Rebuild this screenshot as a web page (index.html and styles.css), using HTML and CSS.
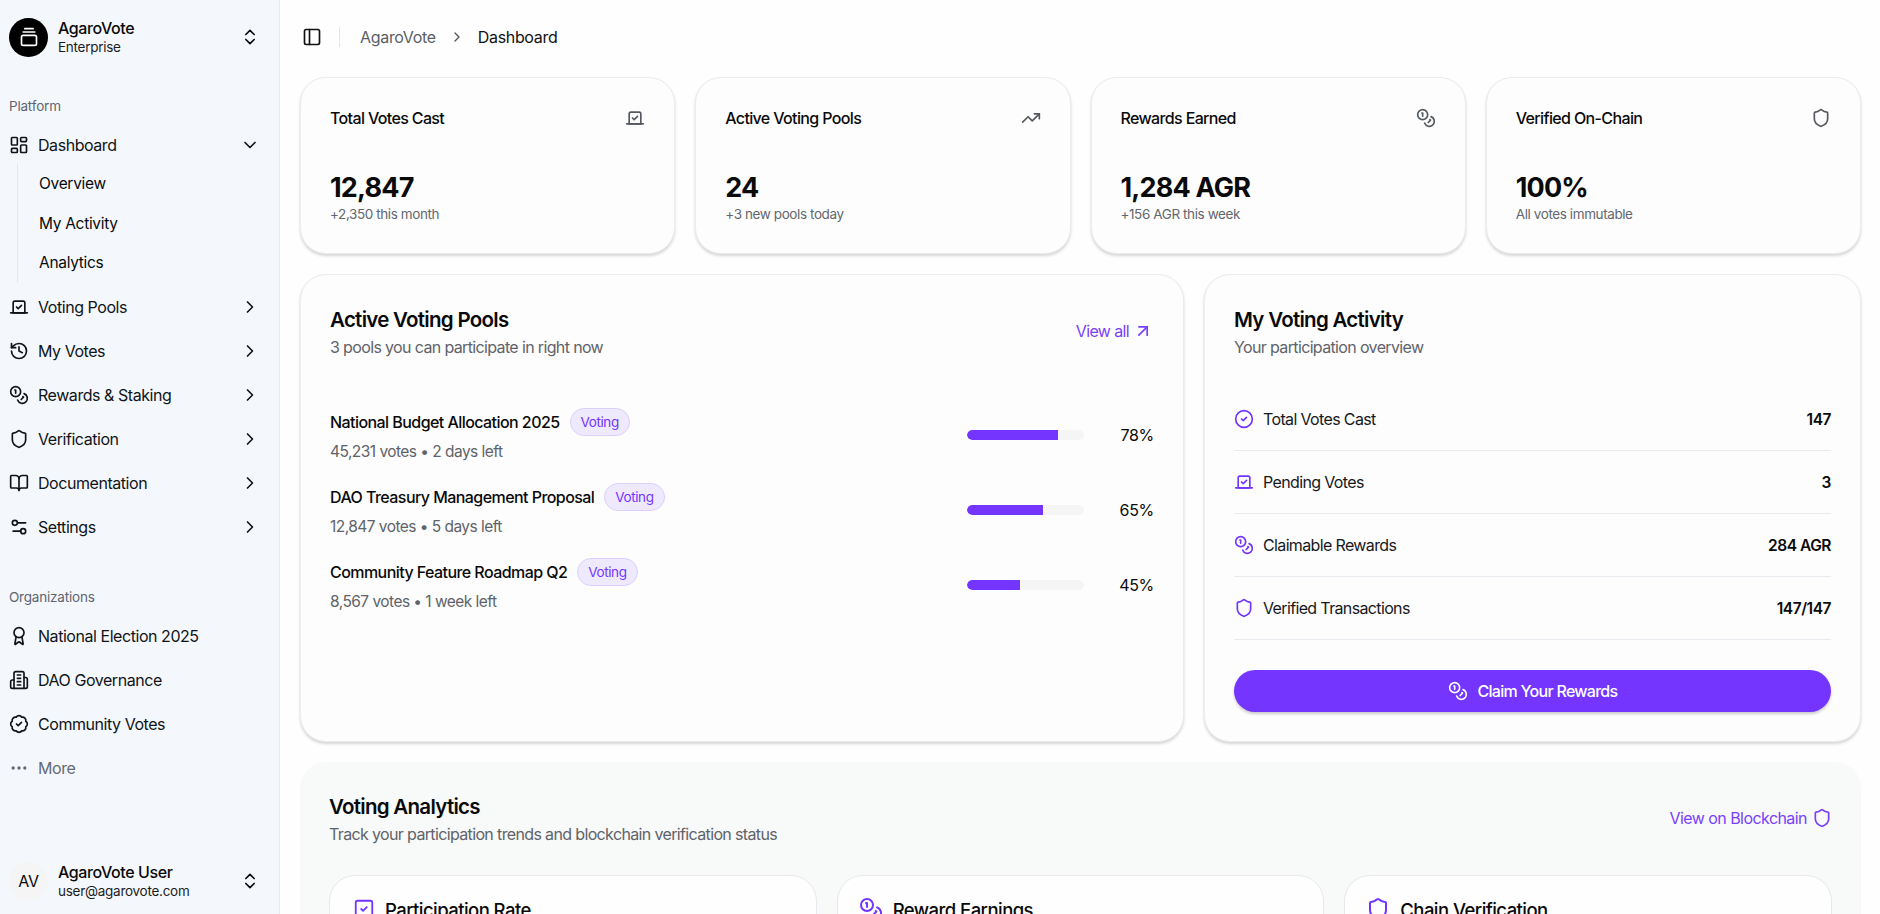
FILE: index.html
```html
<!DOCTYPE html>
<html lang="en">
<head>
<meta charset="utf-8">
<title>AgaroVote Dashboard</title>
<link rel="stylesheet" href="styles.css">
</head>
<body>
<svg class="sprite" xmlns="http://www.w3.org/2000/svg">
  <symbol id="i-logo" viewBox="0 0 24 24"><path d="M7 2h10"/><path d="M5 6h14"/><rect x="3" y="10" width="18" height="12" rx="2"/></symbol>
  <symbol id="i-updown" viewBox="0 0 24 24"><path d="m7 15 5 5 5-5"/><path d="m7 9 5-5 5 5"/></symbol>
  <symbol id="i-dash" viewBox="0 0 24 24"><rect x="3" y="3" width="7" height="9" rx="1"/><rect x="14" y="3" width="7" height="5" rx="1"/><rect x="14" y="12" width="7" height="9" rx="1"/><rect x="3" y="16" width="7" height="5" rx="1"/></symbol>
  <symbol id="i-down" viewBox="0 0 24 24"><path d="m6 9 6 6 6-6"/></symbol>
  <symbol id="i-right" viewBox="0 0 24 24"><path d="m9 18 6-6-6-6"/></symbol>
  <symbol id="i-vote" viewBox="0 0 24 24"><path d="m9 12 2 2 4-4"/><path d="M5 7c0-1.1.9-2 2-2h10a2 2 0 0 1 2 2v12H5V7Z"/><path d="M22 19H2"/></symbol>
  <symbol id="i-history" viewBox="0 0 24 24"><path d="M3 12a9 9 0 1 0 9-9 9.75 9.75 0 0 0-6.74 2.74L3 8"/><path d="M3 3v5h5"/><path d="M12 7v5l4 2"/></symbol>
  <symbol id="i-coins" viewBox="0 0 24 24"><circle cx="8" cy="8" r="6"/><path d="M18.09 10.37A6 6 0 1 1 10.34 18"/><path d="M7 6h1v4"/><path d="m16.71 13.88.7.71-2.82 2.82"/></symbol>
  <symbol id="i-shield" viewBox="0 0 24 24"><path d="M20 13c0 5-3.5 7.5-7.66 8.95a1 1 0 0 1-.67-.01C7.5 20.5 4 18 4 13V6a1 1 0 0 1 1-1c2 0 4.5-1.2 6.24-2.72a1.17 1.17 0 0 1 1.52 0C14.51 3.81 17 5 19 5a1 1 0 0 1 1 1z"/></symbol>
  <symbol id="i-book" viewBox="0 0 24 24"><path d="M12 7v14"/><path d="M3 18a1 1 0 0 1-1-1V4a1 1 0 0 1 1-1h5a4 4 0 0 1 4 4 4 4 0 0 1 4-4h5a1 1 0 0 1 1 1v13a1 1 0 0 1-1 1h-6a3 3 0 0 0-3 3 3 3 0 0 0-3-3z"/></symbol>
  <symbol id="i-settings" viewBox="0 0 24 24"><path d="M20 7h-9"/><path d="M14 17H5"/><circle cx="17" cy="17" r="3"/><circle cx="7" cy="7" r="3"/></symbol>
  <symbol id="i-award" viewBox="0 0 24 24"><path d="m15.477 12.89 1.515 8.526a.5.5 0 0 1-.81.47l-3.58-2.687a1 1 0 0 0-1.197 0l-3.586 2.686a.5.5 0 0 1-.81-.469l1.514-8.526"/><circle cx="12" cy="8" r="6"/></symbol>
  <symbol id="i-building" viewBox="0 0 24 24"><path d="M6 22V4a2 2 0 0 1 2-2h8a2 2 0 0 1 2 2v18Z"/><path d="M6 12H4a2 2 0 0 0-2 2v6a2 2 0 0 0 2 2h2"/><path d="M18 9h2a2 2 0 0 1 2 2v9a2 2 0 0 1-2 2h-2"/><path d="M10 6h4"/><path d="M10 10h4"/><path d="M10 14h4"/><path d="M10 18h4"/></symbol>
  <symbol id="i-badge" viewBox="0 0 24 24"><path d="M3.85 8.62a4 4 0 0 1 4.78-4.77 4 4 0 0 1 6.74 0 4 4 0 0 1 4.78 4.78 4 4 0 0 1 0 6.74 4 4 0 0 1-4.77 4.78 4 4 0 0 1-6.75 0 4 4 0 0 1-4.78-4.77 4 4 0 0 1 0-6.76Z"/><path d="m9 12 2 2 4-4"/></symbol>
  <symbol id="i-more" viewBox="0 0 24 24"><circle cx="12" cy="12" r="1"/><circle cx="19" cy="12" r="1"/><circle cx="5" cy="12" r="1"/></symbol>
  <symbol id="i-panel" viewBox="0 0 24 24"><rect x="3" y="3" width="18" height="18" rx="2"/><path d="M9 3v18"/></symbol>
  <symbol id="i-trend" viewBox="0 0 24 24"><path d="M22 7 13.5 15.5 8.5 10.5 2 17"/><path d="M16 7h6v6"/></symbol>
  <symbol id="i-arrow" viewBox="0 0 24 24"><path d="M7 7h10v10"/><path d="M7 17 17 7"/></symbol>
  <symbol id="i-check" viewBox="0 0 24 24"><circle cx="12" cy="12" r="10"/><path d="m9 12 2 2 4-4"/></symbol>
  <symbol id="i-square" viewBox="0 0 24 24"><rect x="3" y="3" width="18" height="18" rx="2"/><path d="m9 12 2 2 4-4"/></symbol>
</svg>

<div class="app">
  <aside class="sidebar">
    <div class="account">
      <span class="logo"><svg class="icon icon-20"><use href="#i-logo"/></svg></span>
      <div class="account-text"><div class="account-name">AgaroVote</div><div class="account-sub">Enterprise</div></div>
      <svg class="icon icon-20 nav-end"><use href="#i-updown"/></svg>
    </div>

    <div class="group-label">Platform</div>
    <nav class="nav">
      <a class="nav-item"><svg class="icon icon-20"><use href="#i-dash"/></svg><span>Dashboard</span><svg class="icon icon-20 nav-end"><use href="#i-down"/></svg></a>
      <div class="subnav">
        <a class="sub-item">Overview</a>
        <a class="sub-item">My Activity</a>
        <a class="sub-item">Analytics</a>
      </div>
      <a class="nav-item"><svg class="icon icon-20"><use href="#i-vote"/></svg><span>Voting Pools</span><svg class="icon icon-20 nav-end"><use href="#i-right"/></svg></a>
      <a class="nav-item"><svg class="icon icon-20"><use href="#i-history"/></svg><span>My Votes</span><svg class="icon icon-20 nav-end"><use href="#i-right"/></svg></a>
      <a class="nav-item"><svg class="icon icon-20"><use href="#i-coins"/></svg><span>Rewards &amp; Staking</span><svg class="icon icon-20 nav-end"><use href="#i-right"/></svg></a>
      <a class="nav-item"><svg class="icon icon-20"><use href="#i-shield"/></svg><span>Verification</span><svg class="icon icon-20 nav-end"><use href="#i-right"/></svg></a>
      <a class="nav-item"><svg class="icon icon-20"><use href="#i-book"/></svg><span>Documentation</span><svg class="icon icon-20 nav-end"><use href="#i-right"/></svg></a>
      <a class="nav-item"><svg class="icon icon-20"><use href="#i-settings"/></svg><span>Settings</span><svg class="icon icon-20 nav-end"><use href="#i-right"/></svg></a>
    </nav>

    <div class="group-label group-org">Organizations</div>
    <nav class="nav">
      <a class="nav-item"><svg class="icon icon-20"><use href="#i-award"/></svg><span>National Election 2025</span></a>
      <a class="nav-item"><svg class="icon icon-20"><use href="#i-building"/></svg><span>DAO Governance</span></a>
      <a class="nav-item"><svg class="icon icon-20"><use href="#i-badge"/></svg><span>Community Votes</span></a>
      <a class="nav-item nav-muted"><svg class="icon icon-20"><use href="#i-more"/></svg><span>More</span></a>
    </nav>

    <div class="account user">
      <span class="avatar">AV</span>
      <div class="account-text"><div class="account-name">AgaroVote User</div><div class="account-sub">user@agarovote.com</div></div>
      <svg class="icon icon-20 nav-end"><use href="#i-updown"/></svg>
    </div>
  </aside>

  <main class="main">
    <header class="topbar">
      <svg class="icon icon-20 panel-toggle"><use href="#i-panel"/></svg>
      <span class="topbar-rule"></span>
      <span class="crumb">AgaroVote</span>
      <svg class="icon icon-16 crumb-sep"><use href="#i-right"/></svg>
      <span class="crumb crumb-current">Dashboard</span>
    </header>

    <section class="stats">
      <article class="card stat">
        <div class="stat-head"><span>Total Votes Cast</span><svg class="icon icon-20"><use href="#i-vote"/></svg></div>
        <div class="stat-value">12,847</div>
        <div class="stat-note">+2,350 this month</div>
      </article>
      <article class="card stat">
        <div class="stat-head"><span>Active Voting Pools</span><svg class="icon icon-20"><use href="#i-trend"/></svg></div>
        <div class="stat-value">24</div>
        <div class="stat-note">+3 new pools today</div>
      </article>
      <article class="card stat">
        <div class="stat-head"><span>Rewards Earned</span><svg class="icon icon-20"><use href="#i-coins"/></svg></div>
        <div class="stat-value">1,284 AGR</div>
        <div class="stat-note">+156 AGR this week</div>
      </article>
      <article class="card stat">
        <div class="stat-head"><span>Verified On-Chain</span><svg class="icon icon-20"><use href="#i-shield"/></svg></div>
        <div class="stat-value">100%</div>
        <div class="stat-note">All votes immutable</div>
      </article>
    </section>

    <section class="panels">
      <article class="card panel">
        <div class="panel-head">
          <div>
            <h2 class="panel-title">Active Voting Pools</h2>
            <p class="panel-sub">3 pools you can participate in right now</p>
          </div>
          <a class="link link-viewall">View all<svg class="icon icon-20"><use href="#i-arrow"/></svg></a>
        </div>
        <div class="pools">
          <div class="pool">
            <div class="pool-info">
              <div class="pool-name"><span>National Budget Allocation 2025</span><span class="badge">Voting</span></div>
              <div class="pool-meta">45,231 votes • 2 days left</div>
            </div>
            <div class="bar"><div class="bar-fill" style="width:78%"></div></div>
            <div class="pct">78%</div>
          </div>
          <div class="pool">
            <div class="pool-info">
              <div class="pool-name"><span>DAO Treasury Management Proposal</span><span class="badge">Voting</span></div>
              <div class="pool-meta">12,847 votes • 5 days left</div>
            </div>
            <div class="bar"><div class="bar-fill" style="width:65%"></div></div>
            <div class="pct">65%</div>
          </div>
          <div class="pool">
            <div class="pool-info">
              <div class="pool-name"><span>Community Feature Roadmap Q2</span><span class="badge">Voting</span></div>
              <div class="pool-meta">8,567 votes • 1 week left</div>
            </div>
            <div class="bar"><div class="bar-fill" style="width:45%"></div></div>
            <div class="pct">45%</div>
          </div>
        </div>
      </article>

      <article class="card panel">
        <div class="panel-head">
          <div>
            <h2 class="panel-title">My Voting Activity</h2>
            <p class="panel-sub">Your participation overview</p>
          </div>
        </div>
        <div class="activity">
          <div class="activity-row"><svg class="icon icon-20 accent"><use href="#i-check"/></svg><span class="activity-label">Total Votes Cast</span><strong>147</strong></div>
          <div class="activity-row"><svg class="icon icon-20 accent"><use href="#i-vote"/></svg><span class="activity-label">Pending Votes</span><strong>3</strong></div>
          <div class="activity-row"><svg class="icon icon-20 accent"><use href="#i-coins"/></svg><span class="activity-label">Claimable Rewards</span><strong>284 AGR</strong></div>
          <div class="activity-row"><svg class="icon icon-20 accent"><use href="#i-shield"/></svg><span class="activity-label">Verified Transactions</span><strong>147/147</strong></div>
        </div>
        <a class="claim"><svg class="icon icon-20"><use href="#i-coins"/></svg>Claim Your Rewards</a>
      </article>
    </section>

    <section class="analytics">
      <div class="panel-head">
        <div>
          <h2 class="panel-title">Voting Analytics</h2>
          <p class="panel-sub">Track your participation trends and blockchain verification status</p>
        </div>
        <a class="link link-chain">View on Blockchain<svg class="icon icon-20"><use href="#i-shield"/></svg></a>
      </div>
      <div class="analytics-grid">
        <article class="mini-card"><svg class="icon icon-22 accent"><use href="#i-square"/></svg><h3>Participation Rate</h3></article>
        <article class="mini-card"><svg class="icon icon-24 accent"><use href="#i-coins"/></svg><h3>Reward Earnings</h3></article>
        <article class="mini-card"><svg class="icon icon-24 accent"><use href="#i-shield"/></svg><h3>Chain Verification</h3></article>
      </div>
    </section>
  </main>
</div>
</body>
</html>
```

FILE: styles.css
```css
* { box-sizing: border-box; }
html, body { margin: 0; height: 100%; overflow: hidden; }
body {
  font-family: Inter, "Noto Sans", sans-serif;
  color: #0a0a0a;
  background: #fefefe;
  font-size: 15px;
}
.sprite { display: none; }
a { color: inherit; text-decoration: none; }
h2, h3, p { margin: 0; }

.icon { fill: none; stroke: currentColor; stroke-width: 2; stroke-linecap: round; stroke-linejoin: round; flex: none; }
.icon-16 { width: 16px; height: 16px; }
.icon-20 { width: 20px; height: 20px; }
.icon-22 { width: 22px; height: 22px; margin: 1px 0 0 2px; }
.icon-24 { width: 24px; height: 24px; }
.accent { color: #7335ff; }

.app { display: flex; height: 914px; overflow: hidden; }

/* Sidebar */
.sidebar {
  width: 280px; flex: none; display: flex; flex-direction: column;
  background: #f4f8fc; border-right: 1px solid #e7ebf0;
  padding: 17px 19px 13px 9px;
}
.account { display: flex; align-items: center; gap: 10px; height: 40px; }
.logo, .avatar {
  width: 39px; height: 39px; border-radius: 50%; flex: none;
  display: flex; align-items: center; justify-content: center;
}
.logo { background: #000; color: #fff; }
.avatar { background: #f5f5f5; font-size: 16px; letter-spacing: -0.02em; }
.account-text { flex: 1; min-width: 0; }
.account-name { font-size: 16px; line-height: 20px; font-weight: 500; letter-spacing: -0.025em; }
.account-sub { font-size: 13.5px; line-height: 19px; letter-spacing: -0.02em; color: #1c1c1c; }
.nav-end { margin-left: auto; }

.group-label { font-size: 13.5px; line-height: 18px; color: #5f6570; margin-top: 40px; letter-spacing: -0.015em; }
.group-org { margin-top: 39px; }
.nav { display: flex; flex-direction: column; margin-top: 8px; }
.nav-item { display: flex; align-items: center; height: 44px; font-size: 16px; letter-spacing: -0.028em; color: #101418; }
.nav-item > span { margin-left: 9px; }
.nav-muted { color: #666b73; }
.subnav {
  display: flex; flex-direction: column; margin: -3px 0 2px 8px;
  border-left: 1px solid #e4e8ee; padding-left: 21px;
}
.sub-item { height: 39.5px; display: flex; align-items: center; font-size: 15.5px; letter-spacing: -0.02em; }
.user { margin-top: auto; }

/* Main */
.main { flex: 1; min-width: 0; display: flex; flex-direction: column; gap: 20px; padding: 0 19px 0 20px; }
.topbar { height: 57px; flex: none; display: flex; align-items: center; padding: 17px 0 0 2px; }
.panel-toggle { color: #111; }
.topbar-rule { width: 1px; height: 20px; background: #e5e5e5; margin: 0 20px 0 17px; }
.crumb { font-size: 16px; letter-spacing: -0.02em; color: #5a5f66; }
.crumb-sep { margin: 0 13px; color: #555; }
.crumb-current { color: #111; }

.card {
  background: #fdfdfd; border: 1px solid #ebebf0; border-radius: 26px;
  box-shadow: 0 2px 3px rgba(0, 0, 0, .16);
}
.stats { display: grid; grid-template-columns: repeat(4, 1fr); gap: 20px; flex: none; }
.stat { height: 177px; padding: 29px 29px 0; }
.stat-head { display: flex; justify-content: space-between; align-items: center; height: 22px; font-size: 16px; font-weight: 500; letter-spacing: -0.04em; }
.stat-head .icon { color: #55595f; }
.stat-value { font-size: 27px; line-height: 38px; font-weight: 700; letter-spacing: -0.03em; margin-top: 40px; }
.stat-note { font-size: 13.5px; line-height: 18px; color: #63676d; letter-spacing: -0.03em; margin-top: -2px; }

.panels { display: grid; grid-template-columns: 884px 1fr; gap: 20px; flex: none; }
.panel { height: 468px; padding: 30px 29px; }
.panel-head { display: flex; justify-content: space-between; align-items: center; }
.panel-title { font-size: 20.5px; line-height: 28px; font-weight: 600; letter-spacing: -0.035em; padding-top: 1px; }
.panel-sub { font-size: 16px; line-height: 20px; color: #5f6369; letter-spacing: -0.04em; margin-top: 3px; }
.link { display: flex; align-items: center; font-size: 16px; color: #7a3ffb; letter-spacing: -0.035em; }
.link-viewall { gap: 4px; margin-right: 1px; letter-spacing: -0.04em; }
.link-chain { gap: 5px; }

.pools { display: flex; flex-direction: column; gap: 21px; margin-top: 51px; }
.pool { display: flex; align-items: center; height: 54px; }
.pool-info { flex: 1; min-width: 0; }
.pool-name { display: flex; align-items: center; gap: 10px; height: 28px; font-size: 16px; font-weight: 500; letter-spacing: -0.035em; }
.badge {
  height: 28px; padding: 0 10px; border-radius: 14px; border: 1px solid #ddd0fd; background: #efe9fe;
  color: #7335ff; font-size: 13.5px; font-weight: 400; letter-spacing: -0.03em; display: flex; align-items: center;
}
.pool-meta { font-size: 15.5px; line-height: 20px; color: #5f6369; letter-spacing: -0.035em; margin-top: 6px; }
.bar { width: 117px; height: 10px; border-radius: 5px; background: #f5f5f5; overflow: hidden; flex: none; }
.bar-fill { height: 100%; background: #7335ff; border-radius: 5px 0 0 5px; }
.pct { width: 70px; flex: none; text-align: right; font-size: 16px; letter-spacing: -0.02em; }

.activity { margin-top: 31px; }
.activity-row { display: flex; align-items: center; gap: 9px; height: 63px; border-bottom: 1px solid #e9e9ef; font-size: 16px; letter-spacing: -0.04em; }
.activity-label { flex: 1; color: #16181c; }
.activity-row strong { font-size: 15.5px; font-weight: 600; letter-spacing: -0.03em; }
.claim {
  display: flex; align-items: center; justify-content: center; gap: 10px;
  height: 42px; margin-top: 30px; border-radius: 21px;
  background: #7335ff; color: #fff; font-size: 16px; font-weight: 500; letter-spacing: -0.045em;
  box-shadow: 0 2px 3px rgba(0, 0, 0, .2);
}

.analytics { background: #f8f9f9; border-radius: 26px; padding: 30px 29px; flex: none; }
.analytics-grid { display: grid; grid-template-columns: repeat(3, 1fr); gap: 20px; margin-top: 31px; }
.mini-card {
  display: flex; align-items: flex-start; align-self: start; gap: 10px;
  height: 140px; padding: 21px 21px 0;
  background: #fefefe; border: 1px solid #e8e8ee; border-radius: 26px;
}
.mini-card h3 { font-size: 18.5px; line-height: 26px; font-weight: 500; letter-spacing: -0.03em; }
```
